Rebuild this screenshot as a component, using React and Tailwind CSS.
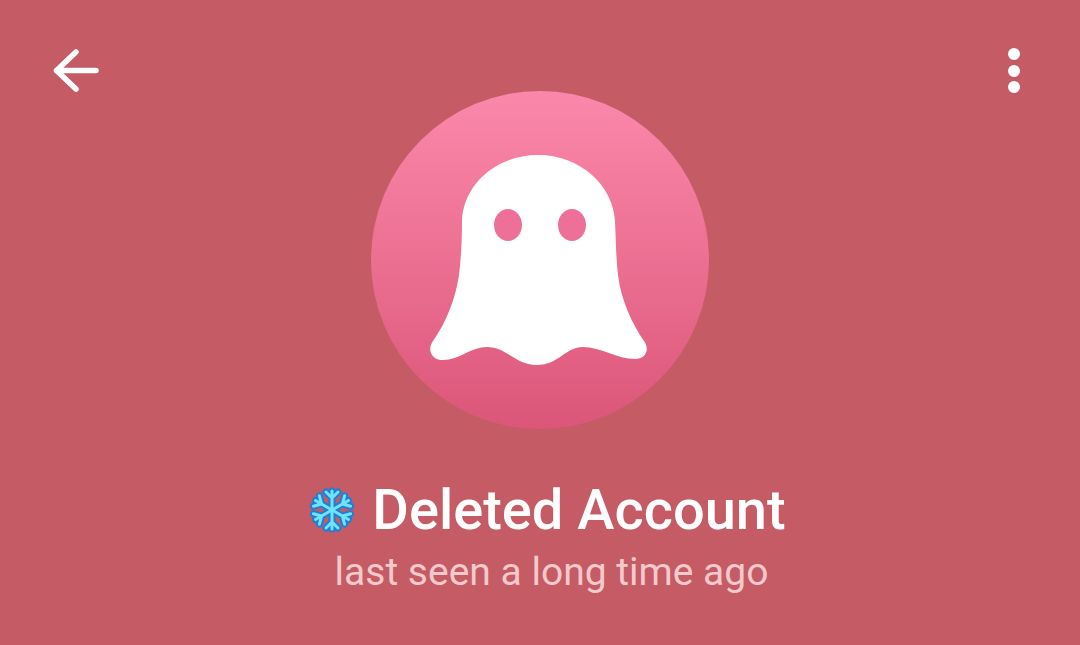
import React from "react";

function Snowflake() {
  const arms = [0, 60, 120, 180, 240, 300];
  const arm = "M24 24V5M24 12l-6-6M24 12l6-6";
  return (
    <svg width="48" height="48" viewBox="0 0 48 48" fill="none" strokeLinecap="round" strokeLinejoin="round">
      {arms.map((a) => (
        <path key={a} d={arm} transform={`rotate(${a} 24 24)`} stroke="#1f7fd6" strokeWidth="7" />
      ))}
      {arms.map((a) => (
        <path key={a} d={arm} transform={`rotate(${a} 24 24)`} stroke="#6fe3f7" strokeWidth="3" />
      ))}
    </svg>
  );
}

function Ghost() {
  return (
    <svg width="338" height="338" viewBox="0 0 338 338" className="block">
      <path
        fill="#ffffff"
        d="M167 64C125 64 92 94 91 130C91 150 90 168 88 184C84 212 72 236 62 250C56 258 60 269 72 269C88 269 100 256 116 256C136 256 144 274 166 274C188 274 194 256 212 256C230 256 246 268 264 268C275 268 279 258 273 250C262 234 250 210 247 184C245 168 245 150 244 130C242 94 209 64 167 64Z"
      />
      <ellipse cx="137" cy="134" rx="14" ry="16" fill="#ee7098" />
      <ellipse cx="201" cy="134" rx="14" ry="16" fill="#ee7098" />
    </svg>
  );
}

export default function App() {
  return (
    <div className="h-[645px] w-[1080px] overflow-hidden bg-[#c55b65] font-['Roboto',sans-serif]">
      <div className="flex items-start justify-between pl-[51px] pr-[60px] pt-[47px]">
        <svg width="50" height="46" viewBox="0 0 50 46" fill="none" stroke="#ffffff" strokeWidth="5.5" strokeLinecap="round" strokeLinejoin="round">
          <path d="M5.5 23.5H45M25 5L5.5 23.5L25 42" />
        </svg>
        <div className="mt-[1px] flex flex-col gap-[4.5px]">
          <span className="h-[12px] w-[12px] rounded-full bg-white" />
          <span className="h-[12px] w-[12px] rounded-full bg-white" />
          <span className="h-[12px] w-[12px] rounded-full bg-white" />
        </div>
      </div>
      <div className="-mt-[2px] flex flex-col items-center">
        <div className="h-[338px] w-[338px] rounded-full bg-gradient-to-b from-[#fb88ab] to-[#db5679]">
          <Ghost />
        </div>
        <div className="mt-[49px] flex items-center gap-[16px] pl-[14px]">
          <Snowflake />
          <span className="text-[56px] font-medium leading-[64px] text-white">Deleted Account</span>
        </div>
        <p className="mt-[6px] pl-[23px] text-[39px] leading-[48px] text-[#f3c9cc]">last seen a long time ago</p>
      </div>
    </div>
  );
}
